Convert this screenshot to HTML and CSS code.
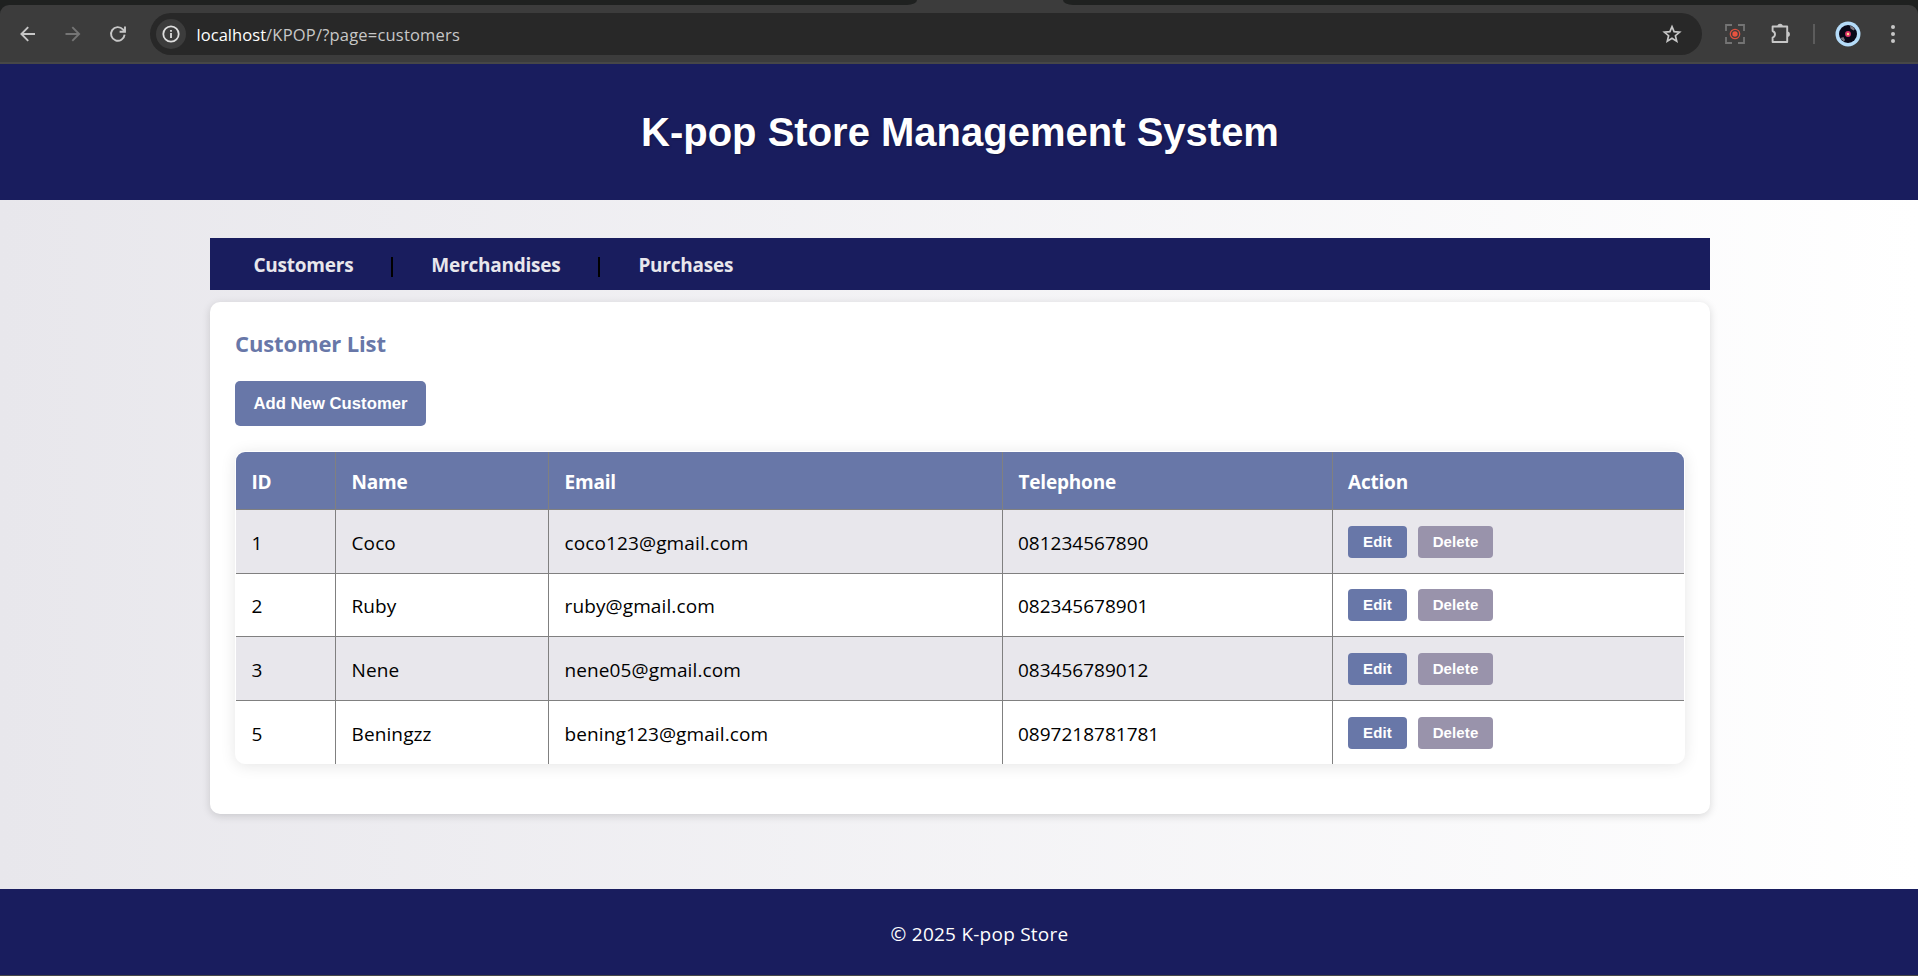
FILE: index.html
```html
<!DOCTYPE html>
<html lang="en">
<head>
<meta charset="utf-8">
<title>K-pop Store Management System</title>
<link rel="stylesheet" href="styles.css">
</head>
<body>
<div class="browser">
  <div class="tabstrip">
    <span class="tabs-left"></span><span class="tabs-right"></span>
  </div>
  <div class="toolbar">
    <svg class="nav-icon" width="20" height="20" viewBox="0 0 20 20" fill="none" stroke="#c7c7c7" stroke-width="1.9"><path d="M17 10H3.6M10.2 3.2 3.4 10l6.8 6.8"/></svg>
    <svg class="nav-icon forward" width="20" height="20" viewBox="0 0 20 20" fill="none" stroke="#757575" stroke-width="1.9"><path d="M2.500 10h13.400M9.300 3.200l6.800 6.800-6.800 6.800"/></svg>
    <svg class="nav-icon reload" width="20" height="20" viewBox="0 0 20 20" fill="none" stroke="#c7c7c7" stroke-width="1.9"><path d="M16.600 10.600a6.800 6.800 0 1 1-1.700-5.200l2 2.200M17 2.600v5.200h-5.400"/></svg>
    <div class="address">
      <span class="site-info"><svg width="18" height="18" viewBox="0 0 18 18" fill="none" stroke="#dedede"><circle cx="9" cy="9" r="7.700" stroke-width="1.800"/><path d="M9 8v5M9 4.900v1.900" stroke-width="1.800"/></svg></span>
      <span class="url"><span class="host">localhost</span>/KPOP/?page=customers</span>
      <svg class="star" width="20" height="20" viewBox="0 0 20 20" fill="none" stroke="#c7c7c7" stroke-width="1.700"><path d="M10 2.600l2.100 5 5.500.5-4.200 3.600 1.300 5.400-4.700-2.900-4.700 2.900 1.300-5.400L2.400 8.100l5.500-.5z"/></svg>
    </div>
    <svg class="capture" width="20" height="20" viewBox="0 0 20 20" fill="none"><path d="M1 7V1h6M13 1h6v6M19 13v6h-6M7 19H1v-6" stroke="#747474" stroke-width="1.800"/><circle cx="10" cy="10" r="4.700" stroke="#d9503f" stroke-width="1.300"/><circle cx="10" cy="10" r="2.700" fill="#e8533f"/></svg>
    <svg class="puzzle" width="22" height="22" viewBox="0 0 22 22"><path d="M2.600 3.500H17.200V19H2.600V14.600Q5 13.600 5 11.300T2.600 8z" fill="none" stroke="#c7c7c7" stroke-width="1.900" stroke-linejoin="round"/><path d="M7.400 3.500a2.700 2.700 0 0 1 5.400 0M17.200 8.600a2.700 2.700 0 0 1 0 5.400" fill="#c7c7c7"/></svg>
    <span class="divider"></span>
    <svg class="avatar" width="26" height="26" viewBox="0 0 26 26"><circle cx="13" cy="13" r="12.500" fill="#b5dcf9"/><circle cx="13" cy="13" r="9" fill="#080718"/><path d="M15 4.700q3 .5 5 3.200l-1.500 1.500-3-2zM5.500 17l3-1 1.500 3-1 1.500q-2-1-3.500-3.500" fill="#77747c"/><circle cx="13" cy="13" r="2.900" fill="#df326c"/><circle cx="13" cy="13" r="1.200" fill="#ffe08a"/></svg>
    <svg class="menu" width="6" height="20" viewBox="0 0 6 20" fill="#c7c7c7"><circle cx="3" cy="3" r="2"/><circle cx="3" cy="10" r="2"/><circle cx="3" cy="17" r="2"/></svg>
  </div>
</div>

<header class="site-header"><h1>K-pop Store Management System</h1></header>

<main class="container">
  <nav class="main-nav">
    <a>Customers</a><span class="sep"></span><a>Merchandises</a><span class="sep"></span><a>Purchases</a>
  </nav>
  <section class="card">
    <h2>Customer List</h2>
    <button class="btn add">Add New Customer</button>
    <div class="table-wrap">
      <table>
        <colgroup><col class="c-id"><col class="c-name"><col class="c-email"><col class="c-tel"><col class="c-action"></colgroup>
        <thead><tr><th>ID</th><th>Name</th><th>Email</th><th>Telephone</th><th>Action</th></tr></thead>
        <tbody>
          <tr><td>1</td><td>Coco</td><td>coco123@gmail.com</td><td class="tel">081234567890</td><td><div class="actions"><button class="btn edit">Edit</button><button class="btn delete">Delete</button></div></td></tr>
          <tr><td>2</td><td>Ruby</td><td>ruby@gmail.com</td><td class="tel">082345678901</td><td><div class="actions"><button class="btn edit">Edit</button><button class="btn delete">Delete</button></div></td></tr>
          <tr><td>3</td><td>Nene</td><td>nene05@gmail.com</td><td class="tel">083456789012</td><td><div class="actions"><button class="btn edit">Edit</button><button class="btn delete">Delete</button></div></td></tr>
          <tr><td>5</td><td>Beningzz</td><td>bening123@gmail.com</td><td class="tel">0897218781781</td><td><div class="actions"><button class="btn edit">Edit</button><button class="btn delete">Delete</button></div></td></tr>
        </tbody>
      </table>
    </div>
  </section>
</main>

<footer class="site-footer"><p>© 2025 K-pop Store</p></footer>
</body>
</html>
```
FILE: styles.css
```css
* { box-sizing: border-box; }

body {
  margin: 0;
  height: 976px;
  overflow: hidden;
  display: flex;
  flex-direction: column;
  font: 19px/26px "Open Sans", "Noto Sans", sans-serif;
  letter-spacing: 0.12px;
  color: #000;
  background: linear-gradient(to right, #e8e7ec, #fff);
}

/* Browser chrome */
.browser {
  height: 64px;
  flex: none;
  background: #1f2120;
  border-bottom: 2px solid #474747;
}
.tabstrip {
  height: 5px;
  display: flex;
  justify-content: space-between;
  background: #3c3c3c;
}
.tabs-left, .tabs-right { background: #1f2120; }
.tabs-left { width: 917px; border-bottom-right-radius: 10px 5px; }
.tabs-right { width: 855px; border-bottom-left-radius: 10px 5px; }
.toolbar {
  height: 57px;
  display: flex;
  align-items: center;
  padding: 1px 22px 0 18px;
  background: #3c3c3c;
  border-radius: 9px 9px 0 0;
}
.nav-icon { flex: none; }
.forward { margin-left: 25px; }
.reload { margin-left: 25px; }
.address {
  flex: 1;
  height: 42px;
  margin: 0 23px 0 22px;
  padding: 0 20px 0 6px;
  display: flex;
  align-items: center;
  border-radius: 21px;
  background: #282828;
}
.site-info {
  width: 30px;
  height: 30px;
  display: flex;
  align-items: center;
  justify-content: center;
  border-radius: 50%;
  background: #3c3c3c;
}
.url {
  flex: 1;
  margin-left: 10.5px;
  padding-top: 1px;
  font-size: 16.5px;
  letter-spacing: 0.2px;
  color: #c7c7c7;
}
.host { color: #fff; letter-spacing: 0.05px; }
.puzzle { margin-left: 25px; }
.divider { width: 2px; height: 20px; margin-left: 21px; background: #5c5c5c; }
.avatar { margin-left: 20px; }
.menu { margin-left: 29px; }

/* Site header */
.site-header {
  height: 136px;
  flex: none;
  display: flex;
  align-items: center;
  justify-content: center;
  padding-left: 2px;
  background: #191d5e;
}
h1 {
  margin: 0 0 1px;
  font: bold 40px/46px "Liberation Sans", Arial, sans-serif;
  letter-spacing: 0;
  color: #fff;
  text-shadow: 1px 1px 2px rgba(0, 0, 0, 0.3);
}

.container {
  width: 1500px;
  height: 689px;
  flex: none;
  margin: 0 auto;
  padding-top: 38px;
  position: relative;
  left: 1px;
}

.main-nav {
  height: 52px;
  display: flex;
  align-items: center;
  padding-left: 43.5px;
  background: #191d5e;
}
.main-nav a {
  font-weight: bold;
  letter-spacing: -0.24px;
  color: #e8e7ec;
  padding-top: 1px;
}
.sep {
  width: 2px;
  height: 20px;
  margin: 5px 38px 0 38px;
  background: #000;
}

.card {
  height: 512px;
  margin-top: 12px;
  padding: 24px 25px 0;
  border-radius: 10px;
  background: #fff;
  box-shadow: 0 2px 8px rgba(0, 0, 0, 0.15);
}
h2 {
  margin: 0;
  font-size: 22px;
  line-height: 34px;
  letter-spacing: -0.13px;
  color: #6877a8;
}
.btn {
  display: block;
  padding: 0;
  border: 0;
  border-radius: 4px;
  font: bold 15px/18px "Liberation Sans", Arial, sans-serif;
  letter-spacing: 0.12px;
  color: #fff;
  background: #6877a8;
}
.add {
  width: 191px;
  height: 45px;
  margin-top: 21px;
  border-radius: 5px;
  font-size: 16.67px;
  letter-spacing: 0.03px;
}

.table-wrap {
  width: 1450px;
  height: 313px;
  margin-top: 25px;
  padding: 1px 1px 0;
  border-radius: 10px;
  overflow: hidden;
  background: #fff;
  box-shadow: 0 2px 15px rgba(0, 0, 0, 0.1);
}
table {
  width: 1448px;
  table-layout: fixed;
  border-collapse: separate;
  border-spacing: 0;
  border-radius: 9px 9px 0 0;
  overflow: hidden;
}
.c-id { width: 100px; }
.c-name { width: 213px; }
.c-email { width: 454px; }
.c-tel { width: 330px; }
th, td {
  padding: 0 0 0 15.5px;
  text-align: left;
  border-right: 1px solid #808080;
  border-bottom: 1px solid #808080;
}
th:last-child, td:last-child { border-right: 0; padding-left: 15px; }
th {
  height: 58px;
  padding-top: 3px;
  color: #fff;
  letter-spacing: -0.2px;
  background: #6877a8;
}
td { height: 64px; padding-top: 2px; }
tr:nth-child(even) td { height: 63px; }
tbody tr:nth-child(odd) td { background: #e8e7ec; }
tbody tr:last-child td { border-bottom: 0; }
td.tel { letter-spacing: 0; padding-left: 15px; }

.actions { display: flex; gap: 11px; padding-bottom: 2px; }
.edit { width: 59px; height: 32px; }
.delete { width: 75px; height: 32px; background: #9993ab; }

.site-footer {
  height: 87px;
  flex: none;
  display: flex;
  justify-content: center;
  padding: 32px 0 0 41px;
  color: #fff;
  background: #191d5e;
  border-bottom: 1px solid #474747;
}
.site-footer p { margin: 0; letter-spacing: 0.24px; }
```
